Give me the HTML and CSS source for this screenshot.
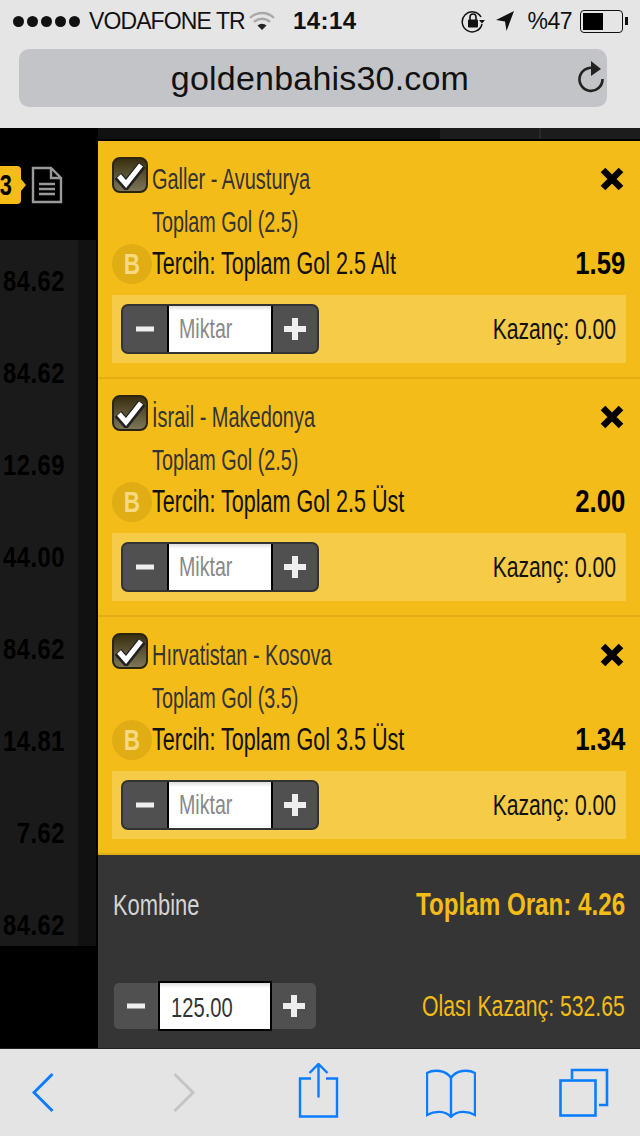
FILE: index.html
```html
<!DOCTYPE html>
<html lang="tr">
<head>
    <meta charset="UTF-8">
    <meta name="viewport" content="width=device-width, initial-scale=1.0">
    <title>goldenbahis30.com</title>
    <link rel="stylesheet" href="styles.css">
</head>
<body>
    <header class="browser-top">
        <div class="status-bar">
            <div class="status-left">
                <span class="signal"><i></i><i></i><i></i><i></i><i></i></span>
                <span class="carrier">VODAFONE TR</span>
                <svg class="wifi" width="26" height="20" viewBox="0 0 26 20">
                    <path d="M1 7 A17 17 0 0 1 25 7" fill="none" stroke="#a9a9a9" stroke-width="2.4"/>
                    <path d="M5 11 A11.5 11.5 0 0 1 21 11" fill="none" stroke="#a9a9a9" stroke-width="2.4"/>
                    <path d="M8.5 14.5 A6.5 6.5 0 0 1 17.5 14.5 L13 19 Z" fill="#222"/>
                </svg>
            </div>
            <span class="clock">14:14</span>
            <div class="status-right">
                <svg width="24" height="24" viewBox="0 0 24 24">
                    <path d="M20 8 A10 10 0 1 0 21 15" fill="none" stroke="#111" stroke-width="1.5"/>
                    <path d="M18 11 L24 11 L21 14.5 Z" fill="#111"/>
                    <rect x="7" y="10.5" width="10" height="8" rx="1" fill="#111"/>
                    <path d="M9 11 V8 A3 3 0 0 1 15 8 V11" fill="none" stroke="#111" stroke-width="1.6"/>
                </svg>
                <svg class="arrow" width="20" height="22" viewBox="0 0 20 22">
                    <path d="M19 1 L1 10 L10 11.5 L11.5 21 Z" fill="#111"/>
                </svg>
                <span class="percent">%47</span>
                <span class="battery"><i></i></span>
            </div>
        </div>
        <div class="url-bar">
            <span class="url">goldenbahis30.com</span>
            <svg class="reload" width="28" height="34" viewBox="0 0 28 34">
                <path d="M20 9.5 A11.5 11.5 0 1 0 25.5 19" fill="none" stroke="#222" stroke-width="2.6"/>
                <path d="M14 1 L24 9 L14 16 Z" fill="#222"/>
            </svg>
        </div>
    </header>

    <div class="top-strip">
        <div class="strip-cell strip-wide"></div>
        <div class="strip-cell strip-mid"></div>
        <div class="strip-cell strip-end"></div>
    </div>

    <main class="content">
        <aside class="sidebar">
            <div class="sidebar-head">
                <span class="count"><b>3</b></span>
                <svg class="doc" width="32" height="38" viewBox="0 0 32 38">
                    <path d="M2 2 H20 L30 12 V36 H2 Z" fill="none" stroke="#9a9a9a" stroke-width="2.4"/>
                    <path d="M20 2 V12 H30" fill="none" stroke="#9a9a9a" stroke-width="2.4"/>
                    <path d="M8 18 H24 M8 23 H24 M8 28 H24" stroke="#9a9a9a" stroke-width="2.4"/>
                </svg>
            </div>
            <div class="odds-list">
                <div class="odds-row">84.62</div>
                <div class="odds-row">84.62</div>
                <div class="odds-row">12.69</div>
                <div class="odds-row">44.00</div>
                <div class="odds-row">84.62</div>
                <div class="odds-row">14.81</div>
                <div class="odds-row">7.62</div>
                <div class="odds-row">84.62</div>
            </div>
        </aside>

        <section class="slip">
            <div class="ticket">
                <div class="ticket-row title-row">
                    <span class="check"><svg width="32" height="30" viewBox="0 0 32 30"><path d="M4 16 L12 25 L28 5" fill="none" stroke="#222" stroke-width="9"/><path d="M5 16 L12 24 L27 5" fill="none" stroke="#fff" stroke-width="5"/></svg></span>
                    <span class="match">Galler - Avusturya</span>
                    <svg class="close" width="26" height="24" viewBox="0 0 26 24"><path d="M4 3 L22 21 M22 3 L4 21" stroke="#000" stroke-width="6.5"/></svg>
                </div>
                <div class="market">Toplam Gol (2.5)</div>
                <div class="ticket-row pick-row">
                    <span class="bank"><b>B</b></span>
                    <span class="pick">Tercih: Toplam Gol 2.5 Alt</span>
                    <span class="odd">1.59</span>
                </div>
                <div class="stake">
                    <div class="stepper">
                        <span class="step"><svg width="20" height="20" viewBox="0 0 20 20"><path d="M1 10 H19" stroke="#eee" stroke-width="5"/></svg></span>
                        <span class="amount placeholder"><span class="amount-text">Miktar</span></span>
                        <span class="step"><svg width="24" height="24" viewBox="0 0 24 24"><path d="M1 12 H23 M12 1 V23" stroke="#eee" stroke-width="6"/></svg></span>
                    </div>
                    <span class="win">Kazanç: 0.00</span>
                </div>
            </div>

            <div class="ticket">
                <div class="ticket-row title-row">
                    <span class="check"><svg width="32" height="30" viewBox="0 0 32 30"><path d="M4 16 L12 25 L28 5" fill="none" stroke="#222" stroke-width="9"/><path d="M5 16 L12 24 L27 5" fill="none" stroke="#fff" stroke-width="5"/></svg></span>
                    <span class="match">İsrail - Makedonya</span>
                    <svg class="close" width="26" height="24" viewBox="0 0 26 24"><path d="M4 3 L22 21 M22 3 L4 21" stroke="#000" stroke-width="6.5"/></svg>
                </div>
                <div class="market">Toplam Gol (2.5)</div>
                <div class="ticket-row pick-row">
                    <span class="bank"><b>B</b></span>
                    <span class="pick">Tercih: Toplam Gol 2.5 Üst</span>
                    <span class="odd">2.00</span>
                </div>
                <div class="stake">
                    <div class="stepper">
                        <span class="step"><svg width="20" height="20" viewBox="0 0 20 20"><path d="M1 10 H19" stroke="#eee" stroke-width="5"/></svg></span>
                        <span class="amount placeholder"><span class="amount-text">Miktar</span></span>
                        <span class="step"><svg width="24" height="24" viewBox="0 0 24 24"><path d="M1 12 H23 M12 1 V23" stroke="#eee" stroke-width="6"/></svg></span>
                    </div>
                    <span class="win">Kazanç: 0.00</span>
                </div>
            </div>

            <div class="ticket">
                <div class="ticket-row title-row">
                    <span class="check"><svg width="32" height="30" viewBox="0 0 32 30"><path d="M4 16 L12 25 L28 5" fill="none" stroke="#222" stroke-width="9"/><path d="M5 16 L12 24 L27 5" fill="none" stroke="#fff" stroke-width="5"/></svg></span>
                    <span class="match">Hırvatistan - Kosova</span>
                    <svg class="close" width="26" height="24" viewBox="0 0 26 24"><path d="M4 3 L22 21 M22 3 L4 21" stroke="#000" stroke-width="6.5"/></svg>
                </div>
                <div class="market">Toplam Gol (3.5)</div>
                <div class="ticket-row pick-row">
                    <span class="bank"><b>B</b></span>
                    <span class="pick">Tercih: Toplam Gol 3.5 Üst</span>
                    <span class="odd">1.34</span>
                </div>
                <div class="stake">
                    <div class="stepper">
                        <span class="step"><svg width="20" height="20" viewBox="0 0 20 20"><path d="M1 10 H19" stroke="#eee" stroke-width="5"/></svg></span>
                        <span class="amount placeholder"><span class="amount-text">Miktar</span></span>
                        <span class="step"><svg width="24" height="24" viewBox="0 0 24 24"><path d="M1 12 H23 M12 1 V23" stroke="#eee" stroke-width="6"/></svg></span>
                    </div>
                    <span class="win">Kazanç: 0.00</span>
                </div>
            </div>

            <div class="summary">
                <div class="summary-row summary-top">
                    <span class="combo">Kombine</span>
                    <span class="total">Toplam Oran: 4.26</span>
                </div>
                <div class="summary-row summary-bottom">
                    <div class="stepper stepper-flat">
                        <span class="step"><svg width="20" height="20" viewBox="0 0 20 20"><path d="M1 10 H19" stroke="#eee" stroke-width="5"/></svg></span>
                        <span class="amount"><span class="amount-text">125.00</span></span>
                        <span class="step"><svg width="24" height="24" viewBox="0 0 24 24"><path d="M1 12 H23 M12 1 V23" stroke="#eee" stroke-width="6"/></svg></span>
                    </div>
                    <span class="possible">Olası Kazanç: 532.65</span>
                </div>
            </div>
        </section>
    </main>

    <nav class="toolbar">
        <svg width="50" height="50" viewBox="0 0 50 50">
            <path d="M20.5 6 L2 24.5 L20.5 43" fill="none" stroke="#0a7cff" stroke-width="3"/>
        </svg>
        <svg width="50" height="50" viewBox="0 0 50 50">
            <path d="M9.5 6 L28 24.5 L9.5 43" fill="none" stroke="#c4c4c4" stroke-width="3"/>
        </svg>
        <svg class="share" width="45" height="56" viewBox="0 0 45 56">
            <path d="M13 15.5 H2 V53.5 H39 V15.5 H28" fill="none" stroke="#0a7cff" stroke-width="2.4"/>
            <path d="M20.5 34.5 V1.5 M11.5 10 L20.5 1 L29.5 10" fill="none" stroke="#0a7cff" stroke-width="2.4"/>
        </svg>
        <svg width="50" height="50" viewBox="0 0 50 50">
            <path d="M25 10 C20 2 8 1 1 5 V47 C8 43 19 42 25 49 C31 42 42 43 49 47 V5 C42 1 30 2 25 10 V48" fill="none" stroke="#0a7cff" stroke-width="2.4"/>
        </svg>
        <svg width="50" height="50" viewBox="0 0 50 50">
            <rect x="1.5" y="12.5" width="35" height="35" fill="none" stroke="#0a7cff" stroke-width="2.6"/>
            <path d="M13 11 V2 H48 V37 H40" fill="none" stroke="#0a7cff" stroke-width="2.6"/>
        </svg>
    </nav>
</body>
</html>
```

FILE: styles.css
```css
* {
    box-sizing: border-box;
}

body {
    font-family: 'Liberation Sans', sans-serif;
    margin: 0;
    width: 640px;
    height: 1136px;
    background-color: #000;
    overflow: hidden;
}

/* browser chrome */
.browser-top {
    height: 128px;
    background-color: #e5e5e5;
    padding: 0 19px 0 13px;
    color: #111;
}

.status-bar {
    display: flex;
    align-items: center;
    height: 42px;
}

.status-left {
    display: flex;
    align-items: center;
    width: 280px;
}

.signal {
    display: flex;
    gap: 3px;
    margin-right: 9px;
}

.signal i {
    width: 11px;
    height: 11px;
    border-radius: 50%;
    background-color: #111;
}

.carrier {
    font-size: 23px;
    letter-spacing: -0.9px;
    margin-right: 4px;
}

.clock {
    font-size: 24px;
    font-weight: bold;
    letter-spacing: 0.4px;
}

.status-right {
    display: flex;
    align-items: center;
    margin-left: auto;
    margin-right: -2px;
}

.arrow {
    margin-left: 10px;
}

.percent {
    font-size: 23px;
    margin-left: 12px;
    letter-spacing: -0.5px;
}

.battery {
    position: relative;
    display: block;
    width: 43px;
    height: 23px;
    margin-left: 8px;
    border: 1.5px solid #111;
    border-radius: 4px;
    padding: 2px;
}

.battery i {
    display: block;
    width: 20px;
    height: 100%;
    background-color: #000;
}

.battery::after {
    content: "";
    position: absolute;
    right: -6px;
    top: 6px;
    width: 3px;
    height: 8px;
    background-color: #111;
}

.url-bar {
    position: relative;
    display: flex;
    align-items: center;
    justify-content: center;
    height: 58px;
    width: 588px;
    margin: 7px 0 0 6px;
    padding-left: 14px;
    border-radius: 10px;
    background-color: #c3c4c8;
}

.url {
    font-size: 34px;
    color: #111;
    letter-spacing: 0.2px;
}

.reload {
    position: absolute;
    right: 2px;
    top: 11px;
}

/* strip above the slip */
.top-strip {
    display: flex;
    height: 13px;
    padding: 0 0 2px 98px;
    background-color: #000;
}

.strip-cell {
    background-color: #1c1c1c;
}

.strip-wide {
    width: 342px;
    background-color: #111;
}

.strip-mid {
    width: 101px;
    border-right: 2px solid #2a2a2a;
}

.strip-end {
    flex: 1;
}

.content {
    display: flex;
    height: 907px;
}

/* left column */
.sidebar {
    width: 98px;
    flex-shrink: 0;
}

.sidebar-head {
    display: flex;
    align-items: flex-start;
    height: 99px;
    padding-top: 25px;
}

.count {
    position: relative;
    width: 21px;
    height: 38px;
    border-radius: 0 4px 4px 0;
    background-color: #f3bc18;
    color: #000;
    font-size: 29px;
    line-height: 38px;
}

.count b {
    display: block;
    transform: translateX(-3px) scaleX(.75);
}

.count::after {
    content: "";
    position: absolute;
    left: 21px;
    top: 13px;
    border-left: 5px solid #f3bc18;
    border-top: 6px solid transparent;
    border-bottom: 6px solid transparent;
}

.doc {
    margin-left: 10px;
}

.odds-list {
    width: 96px;
    height: 706px;
    padding-top: 26px;
    overflow: hidden;
    background: linear-gradient(to right, #1a1a1a 78px, #111 78px);
}

.odds-row {
    width: 78px;
    height: 92px;
    text-align: right;
    line-height: 30px;
    font-size: 29px;
    font-weight: bold;
    color: #000;
    letter-spacing: 0.6px;
    transform: translateX(-13px) scaleX(.82);
    transform-origin: right;
    white-space: nowrap;
}

/* slip, the source font is condensed so the text gets squeezed */
.slip {
    flex: 1;
    display: flex;
    flex-direction: column;
}

.ticket {
    height: 238px;
    padding: 16px 14px 0;
    background-color: #f3bc18;
    border-bottom: 2px solid #e3ae14;
    color: #333;
    font-size: 30px;
    white-space: nowrap;
}

.ticket-row {
    display: flex;
    align-items: center;
}

.title-row {
    height: 44px;
}

.check {
    align-self: flex-start;
    display: flex;
    align-items: center;
    justify-content: center;
    flex-shrink: 0;
    width: 36px;
    height: 36px;
    margin-right: 4px;
    border: 2px solid #2a2410;
    border-radius: 8px;
    background: linear-gradient(to bottom, #3a3010, #7c7558);
}

.match {
    flex: 1;
    transform: scaleX(.665);
    transform-origin: left;
}

.close {
    margin-right: 1px;
}

.market {
    height: 42px;
    line-height: 42px;
    padding-left: 40px;
    transform: scaleX(.66);
    transform-origin: 40px 0;
}

.pick-row {
    height: 42px;
    color: #111;
}

.bank {
    flex-shrink: 0;
    width: 40px;
    height: 40px;
    border-radius: 50%;
    background-color: #e0ad14;
    color: #f6d981;
    font-size: 30px;
    line-height: 40px;
    text-align: center;
}

.bank b {
    display: block;
    transform: scaleX(.75);
}

.pick {
    flex: 1;
    font-size: 31px;
    transform: scaleX(.695);
    transform-origin: left;
}

.odd {
    margin-right: 1px;
    font-size: 31px;
    font-weight: bold;
    color: #000;
    transform: scaleX(.83);
    transform-origin: right;
}

.stake {
    display: flex;
    align-items: center;
    justify-content: space-between;
    height: 68px;
    margin-top: 10px;
    padding: 0 10px 0 9px;
    background-color: #f5cb48;
    color: #111;
}

.win {
    transform: scaleX(.705);
    transform-origin: right;
}

.stepper {
    display: flex;
    flex-shrink: 0;
    width: 198px;
    height: 50px;
    border: 2px solid #333;
    border-radius: 7px;
    background-color: #505050;
    overflow: hidden;
}

.step {
    display: flex;
    align-items: center;
    justify-content: center;
    flex: 1;
}

.amount {
    flex-shrink: 0;
    width: 106px;
    padding-left: 10px;
    border: 2px solid #000;
    border-width: 0 2px;
    background: linear-gradient(to bottom, #ddd, #fff 5px);
    color: #333;
    font-size: 28px;
    line-height: 46px;
}

.amount-text {
    display: block;
    transform: scaleX(.70);
    transform-origin: left;
}

.placeholder {
    color: #888;
}

/* totals */
.summary {
    flex: 1;
    padding: 0 15px;
    background-color: #353535;
    white-space: nowrap;
}

.summary-row {
    display: flex;
    align-items: center;
    justify-content: space-between;
}

.summary-top {
    height: 100px;
}

.summary-bottom {
    margin-top: 28px;
    margin-left: 1px;
}

.combo {
    color: #d4d4d4;
    font-size: 30px;
    transform: scaleX(.73);
    transform-origin: left;
}

.total {
    color: #f3bc18;
    font-size: 31px;
    font-weight: bold;
    transform: scaleX(.78);
    transform-origin: right;
}

.possible {
    color: #f3bc18;
    font-size: 30px;
    transform: scaleX(.707);
    transform-origin: right;
}

.stepper-flat {
    width: 202px;
    height: 46px;
    border: 0;
    border-radius: 5px;
    overflow: visible;
}

.stepper-flat .amount {
    width: 114px;
    height: 50px;
    margin-top: -2px;
    padding-left: 11px;
    border-width: 2px;
    line-height: 49px;
}

.stepper-flat .amount-text {
    transform: scaleX(.72);
}

/* bottom toolbar */
.toolbar {
    display: flex;
    align-items: center;
    gap: 83px;
    height: 88px;
    padding-left: 32px;
    background-color: #e4e4e4;
    border-top: 1px solid #222;
}

.toolbar svg {
    flex-shrink: 0;
}

.share {
    margin-top: -4px;
}
```
